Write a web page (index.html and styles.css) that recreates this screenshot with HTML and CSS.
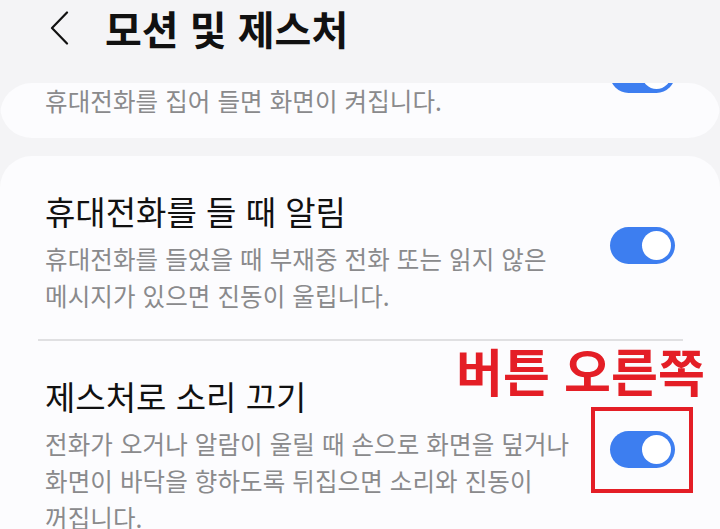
FILE: index.html
```html
<!DOCTYPE html>
<html lang="ko">
<head>
    <meta charset="UTF-8">
    <meta name="viewport" content="width=device-width, initial-scale=1.0">
    <title>모션 및 제스처</title>
    <link rel="stylesheet" href="styles.css">
</head>
<body>

    <div class="header">
        <svg class="back" width="20" height="34" viewBox="0 0 20 34">
            <path d="M18 1.5 L3 17 L18 32.5" fill="none" stroke="#111" stroke-width="2.2" stroke-linecap="round" stroke-linejoin="round"/>
        </svg>
        <h1>모션 및 제스처</h1>
    </div>

    <div class="list">
        <!-- 위로 스크롤되어 일부만 보이는 항목 -->
        <div class="card first">
            <div class="item">
                <div class="text">
                    <div class="desc">휴대전화를 집어 들면 화면이 켜집니다.</div>
                </div>
                <div class="toggle on"></div>
            </div>
        </div>

        <div class="card">
            <div class="item">
                <div class="text">
                    <div class="title">휴대전화를 들 때 알림</div>
                    <div class="desc">휴대전화를 들었을 때 부재중 전화 또는 읽지 않은<br>메시지가 있으면 진동이 울립니다.</div>
                </div>
                <div class="toggle on"></div>
            </div>
            <div class="divider"></div>
            <div class="item">
                <div class="text">
                    <div class="title">제스처로 소리 끄기</div>
                    <div class="desc">전화가 오거나 알람이 울릴 때 손으로 화면을 덮거나<br>화면이 바닥을 향하도록 뒤집으면 소리와 진동이<br>꺼집니다.</div>
                </div>
                <div class="toggle on"></div>
            </div>
        </div>
    </div>

    <!-- 설명용 표시 -->
    <div class="note">버튼 오른쪽</div>
    <div class="note-box"></div>

</body>
</html>
```

FILE: styles.css
```css
body {
    font-family: "Noto Sans CJK KR", "Noto Sans", sans-serif;
    background-color: #f4f4f6;
    margin: 0;
    overflow: hidden;
}

.header {
    height: 56px;
    margin-bottom: 27px;
    display: flex;
    align-items: center;
}

.back {
    margin-left: 49px;
    margin-right: 36px;
}

h1 {
    margin: 0;
    font-size: 40px;
    font-weight: 700;
    color: #111;
}

.list {
    overflow: hidden;
    border-radius: 32px 32px 0 0;
    display: flex;
    flex-direction: column;
    gap: 18px;
}

.card {
    background-color: #fcfcfe;
    border-radius: 32px;
}

.card.first {
    margin-top: -85px;
}

.card.first .item {
    padding-top: 84px;
    padding-bottom: 19px;
}

.card.first .toggle {
    align-self: flex-start;
    margin-top: -26px;
    margin-bottom: 0;
}

.item {
    display: flex;
    align-items: center;
    padding: 35px 45px 25px 45px;
}

.text {
    flex: 1;
}

.title {
    font-size: 33px;
    line-height: 40px;
    color: #111;
    margin-bottom: 9px;
}

.desc {
    font-size: 24.5px;
    line-height: 37px;
    letter-spacing: 0.1px;
    color: #8a8a8c;
}

.toggle {
    position: relative;
    width: 65px;
    height: 37px;
    border-radius: 19px;
    background-color: #cfcfd3;
    margin-bottom: 14px;
    flex-shrink: 0;
}

.toggle.on {
    background-color: #3d7ef0;
}

.toggle::after {
    content: "";
    position: absolute;
    top: 4px;
    right: 4px;
    width: 29px;
    height: 29px;
    border-radius: 50%;
    background-color: #fff;
}

.divider {
    height: 2px;
    margin: 0 37px 0 38px;
    background-color: #e0e0e2;
}

.note {
    position: absolute;
    left: 456px;
    top: 342px;
    font-size: 51px;
    line-height: 56px;
    font-weight: 700;
    color: #e41e26;
}

.note-box {
    position: absolute;
    left: 591px;
    top: 407px;
    width: 94px;
    height: 78px;
    border: 4px solid #e41e26;
}
```
